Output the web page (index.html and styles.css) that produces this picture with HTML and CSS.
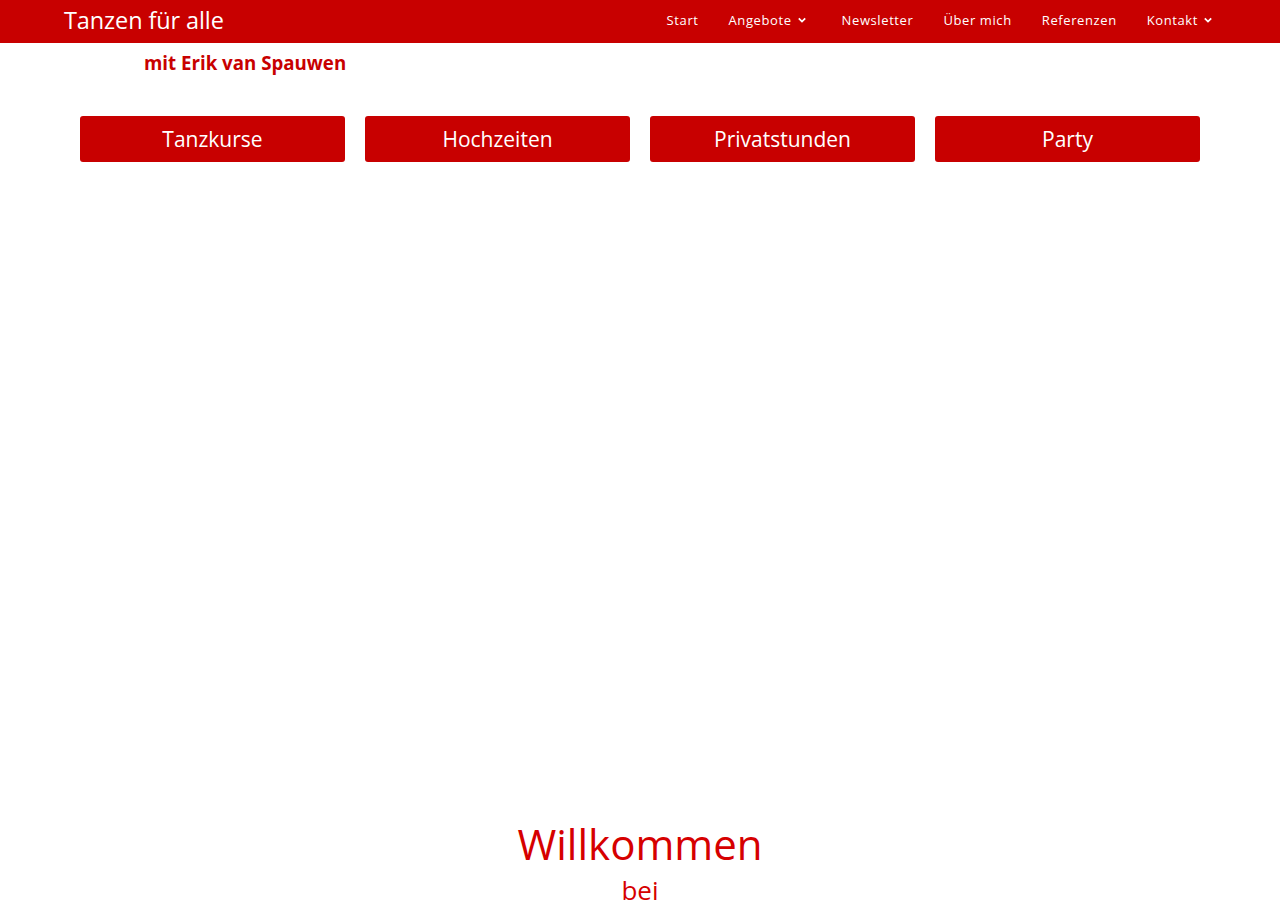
FILE: index.html
```html
<!DOCTYPE html>
<html lang="de">
<head>
<meta charset="utf-8">
<title>Tanzen für alle</title>
<link rel="stylesheet" href="styles.css">
</head>
<body>
<header class="topbar">
  <div class="topbar-inner">
    <a class="brand" href="#">Tanzen für alle</a>
    <nav class="menu">
      <a class="menu-item" href="#">Start</a>
      <a class="menu-item has-sub" href="#">Angebote <svg class="chev" viewBox="0 0 10 6" width="8" height="6"><path d="M1 1 L5 5 L9 1" fill="none" stroke="#fff" stroke-width="2.2"/></svg></a>
      <a class="menu-item" href="#">Newsletter</a>
      <a class="menu-item" href="#">Über mich</a>
      <a class="menu-item" href="#">Referenzen</a>
      <a class="menu-item has-sub" href="#">Kontakt <svg class="chev" viewBox="0 0 10 6" width="8" height="6"><path d="M1 1 L5 5 L9 1" fill="none" stroke="#fff" stroke-width="2.2"/></svg></a>
    </nav>
  </div>
</header>
<main>
  <div class="subtitle">mit Erik van Spauwen</div>
  <div class="buttons">
    <a class="btn" href="#">Tanzkurse</a>
    <a class="btn" href="#">Hochzeiten</a>
    <a class="btn" href="#">Privatstunden</a>
    <a class="btn" href="#">Party</a>
  </div>
  <div class="spacer"></div>
  <section class="welcome">
    <h1>Willkommen</h1>
    <h2>bei</h2>
  </section>
</main>
</body>
</html>
```
FILE: styles.css
```css
* { box-sizing: border-box; }
html, body { margin: 0; padding: 0; }
body {
  font-family: "Open Sans", "Noto Sans", sans-serif;
  background: #fff;
  color: #333;
  overflow: hidden;
}
a { text-decoration: none; }
.topbar {
  background: #c80000;
  height: 43px;
}
.topbar-inner {
  height: 43px;
  display: flex;
  align-items: center;
  justify-content: space-between;
  padding: 0 47px 0 64px;
}
.brand {
  color: #fff;
  font-size: 23.5px;
  letter-spacing: -0.1px;
  line-height: 40px;
  padding-bottom: 3px;
}
.menu {
  display: flex;
  align-items: center;
  height: 43px;
}
.menu-item {
  color: #fff;
  font-size: 13px;
  letter-spacing: 0.6px;
  padding: 0 15px 4px;
  display: flex;
  align-items: center;
  gap: 6px;
  height: 43px;
}
.menu-item.has-sub { padding-right: 21px; }
.chev { display: block; margin-top: 1px; }
.subtitle {
  color: #c80000;
  font-weight: 700;
  font-size: 18.7px;
  padding: 7px 0 0 144px;
  line-height: 26px;
}
.buttons {
  display: grid;
  grid-template-columns: repeat(4, 1fr);
  gap: 20px;
  width: 1120px;
  margin: 40px auto 0;
}
.btn {
  background: #c80000;
  color: #fff;
  height: 46px;
  border-radius: 3px;
  font-size: 21px;
  display: flex;
  align-items: center;
  justify-content: center;
  padding-bottom: 0;
}
.spacer { height: 656px; }
.welcome { text-align: center; color: #d60000; }
.welcome h1 {
  margin: 0;
  font-weight: 400;
  font-size: 42px;
  line-height: 52px;
}
.welcome h2 {
  margin: 0;
  font-weight: 400;
  font-size: 26px;
  line-height: 40px;
}
```
